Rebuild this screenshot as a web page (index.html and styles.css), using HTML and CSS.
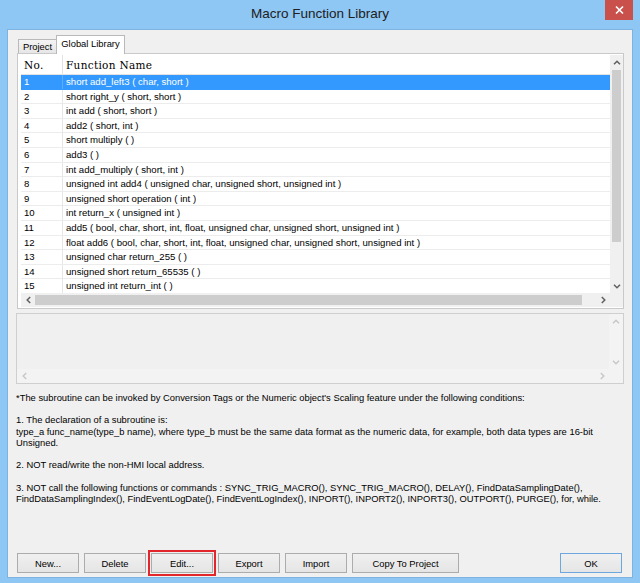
FILE: index.html
```html
<!DOCTYPE html>
<html lang="en">
<head>
  <meta charset="UTF-8" />
  <title>Macro Function Library</title>
  <link rel="stylesheet" href="styles.css">
</head>
<body>
  <div class="window">
    <div class="titlebar">
      <span></span>
      <span class="title">Macro Function Library</span>
      <span class="close">
        <svg width="9" height="8" viewBox="0 0 9 8"><path d="M1 0.5 L8 7.5 M8 0.5 L1 7.5" stroke="#fff" stroke-width="1.6" fill="none" /></svg>
      </span>
    </div>

    <div class="client">
      <!-- Tabs -->
      <div class="tabs">
        <div class="tab">Project</div>
        <div class="tab active">Global Library</div>
      </div>

      <div class="panel">
        <div class="listview">
          <div class="rows">
            <div class="row head"><span class="c-no">No.</span><span class="c-fn">Function Name</span></div>
            <div class="row selected"><span class="c-no">1</span><span class="c-fn">short add_left3 ( char, short )</span></div>
            <div class="row"><span class="c-no">2</span><span class="c-fn">short right_y ( short, short )</span></div>
            <div class="row"><span class="c-no">3</span><span class="c-fn">int add ( short, short )</span></div>
            <div class="row"><span class="c-no">4</span><span class="c-fn">add2 ( short, int )</span></div>
            <div class="row"><span class="c-no">5</span><span class="c-fn">short multiply ( )</span></div>
            <div class="row"><span class="c-no">6</span><span class="c-fn">add3 ( )</span></div>
            <div class="row"><span class="c-no">7</span><span class="c-fn">int add_multiply ( short, int )</span></div>
            <div class="row"><span class="c-no">8</span><span class="c-fn">unsigned int add4 ( unsigned char, unsigned short, unsigned int )</span></div>
            <div class="row"><span class="c-no">9</span><span class="c-fn">unsigned short operation ( int )</span></div>
            <div class="row"><span class="c-no">10</span><span class="c-fn">int return_x ( unsigned int )</span></div>
            <div class="row"><span class="c-no">11</span><span class="c-fn">add5 ( bool, char, short, int, float, unsigned char, unsigned short, unsigned int )</span></div>
            <div class="row"><span class="c-no">12</span><span class="c-fn">float add6 ( bool, char, short, int, float, unsigned char, unsigned short, unsigned int )</span></div>
            <div class="row"><span class="c-no">13</span><span class="c-fn">unsigned char return_255 ( )</span></div>
            <div class="row"><span class="c-no">14</span><span class="c-fn">unsigned short return_65535 ( )</span></div>
            <div class="row"><span class="c-no">15</span><span class="c-fn">unsigned int return_int ( )</span></div>
          </div>

          <!-- vertical scrollbar -->
          <div class="vscroll">
            <div class="arrow"><svg width="8" height="5" viewBox="0 0 8 5"><polyline points="1,4.2 4,1.2 7,4.2" /></svg></div>
            <div class="track"><div class="thumb-v"></div></div>
            <div class="arrow"><svg width="8" height="5" viewBox="0 0 8 5"><polyline points="1,0.8 4,3.8 7,0.8" /></svg></div>
          </div>

          <!-- horizontal scrollbar -->
          <div class="hscroll">
            <div class="arrow"><svg width="5" height="8" viewBox="0 0 5 8"><polyline points="4.2,1 1.2,4 4.2,7" /></svg></div>
            <div class="track"><div class="thumb-h"></div></div>
            <div class="arrow"><svg width="5" height="8" viewBox="0 0 5 8"><polyline points="0.8,1 3.8,4 0.8,7" /></svg></div>
          </div>
          <div class="corner"></div>
        </div>
      </div>

      <!-- description box (empty, disabled) -->
      <div class="descbox">
        <div class="desc-body"></div>
        <div class="vscroll disabled">
          <div class="arrow"><svg width="8" height="5" viewBox="0 0 8 5"><polyline points="1,4.2 4,1.2 7,4.2" /></svg></div>
          <div class="track"></div>
          <div class="arrow"><svg width="8" height="5" viewBox="0 0 8 5"><polyline points="1,0.8 4,3.8 7,0.8" /></svg></div>
        </div>
        <div class="hscroll disabled">
          <div class="arrow"><svg width="5" height="8" viewBox="0 0 5 8"><polyline points="4.2,1 1.2,4 4.2,7" /></svg></div>
          <div class="track"></div>
          <div class="arrow"><svg width="5" height="8" viewBox="0 0 5 8"><polyline points="0.8,1 3.8,4 0.8,7" /></svg></div>
        </div>
        <div class="corner"></div>
      </div>

      <div class="notes">
        <p>*The subroutine can be invoked by Conversion Tags or the Numeric object's Scaling feature under the following conditions:</p>
        <p>1. The declaration of a subroutine is:<br>type_a func_name(type_b name), where type_b must be the same data format as the numeric data, for example, both data types are 16-bit<br>Unsigned.</p>
        <p>2. NOT read/write the non-HMI local address.</p>
        <p>3. NOT call the following functions or commands : SYNC_TRIG_MACRO(), SYNC_TRIG_MACRO(), DELAY(), FindDataSamplingDate(),<br>FindDataSamplingIndex(), FindEventLogDate(), FindEventLogIndex(), INPORT(), INPORT2(), INPORT3(), OUTPORT(), PURGE(), for, while.</p>
      </div>

      <div class="buttons">
        <button class="btn">New...</button>
        <button class="btn">Delete</button>
        <button class="btn marked">Edit...</button>
        <button class="btn">Export</button>
        <button class="btn">Import</button>
        <button class="btn wide">Copy To Project</button>
        <button class="btn default">OK</button>
      </div>
    </div>
  </div>
</body>
</html>
```

FILE: styles.css
```css
body {
  margin: 0;
  background-color: #8ec7f4;
  font-family: "Liberation Sans", Arial, sans-serif;
  font-size: 9.4px;
  color: #000;
}

.window {
  height: 583px;
  display: flex;
  flex-direction: column;
}

/* title bar */
.titlebar {
  height: 29px;
  flex: none;
  display: grid;
  grid-template-columns: 1fr auto 1fr;
  align-items: start;
}

.title {
  font-size: 13.5px;
  color: #202020;
  padding-top: 6px;
}

.close {
  justify-self: end;
  margin-right: 7px;
  width: 28px;
  height: 20px;
  background-color: #c9504b;
  display: flex;
  align-items: center;
  justify-content: center;
}

.client {
  flex: 1;
  margin: 0 7px 5px;
  border: 1px solid #7fb3df;
  background-color: #f0f0f0;
  display: flex;
  flex-direction: column;
}

/* tabs */
.tabs {
  height: 23px;
  flex: none;
  display: flex;
  align-items: flex-end;
  padding-left: 10px;
}

.tab {
  box-sizing: border-box;
  height: 14px;
  width: 39px;
  border: 1px solid #b9b9b9;
  border-bottom: none;
  background: linear-gradient(#f4f4f4, #e6e6e6);
  text-align: center;
  line-height: 13px;
}

.tab.active {
  position: relative;
  z-index: 1;
  height: 19px;
  width: 69px;
  margin-left: -1px;
  margin-bottom: -1px;
  background: #fff;
  line-height: 16px;
}

.panel {
  box-sizing: border-box;
  height: 256px;
  flex: none;
  margin: 0 8px 0 9px;
  border: 1px solid #c9c9c9;
  background-color: #fff;
  padding: 1px 0 1px 3px;
}

.listview {
  display: grid;
  grid-template-columns: 1fr 13px;
  grid-template-rows: 238px 14px;
}

.rows {
  overflow: hidden;
  font-size: 9.6px;
}

.row {
  display: grid;
  grid-template-columns: 42px 1fr;
  height: 14.6px;
  line-height: 14px;
  box-sizing: border-box;
  border-bottom: 1px solid #ececec;
  white-space: nowrap;
}

.row .c-no {
  padding-left: 3px;
  border-right: 1px solid #e6e6e6;
}

.row .c-fn {
  padding-left: 3px;
}

.row.head {
  height: 20px;
  line-height: 20px;
  border-bottom: 1px solid #e2e2e2;
  font-family: "DejaVu Serif", serif;
  font-size: 10.5px;
  letter-spacing: 0.3px;
}

.row.head .c-no {
  border-right-color: #e2e2e2;
}

.row.selected {
  background-color: #3399ff;
  color: #fff;
  border-bottom-color: #3399ff;
}

.row.selected .c-no {
  border-right-color: #5aaeff;
}

/* scrollbars */
.vscroll {
  display: flex;
  flex-direction: column;
  background-color: #f0f0f0;
}

.vscroll .arrow {
  height: 14px;
  display: flex;
  align-items: center;
  justify-content: center;
}

.vscroll .track {
  flex: 1;
  padding: 1px 2px 0;
}

.thumb-v {
  height: 172px;
  background-color: #cdcdcd;
}

.hscroll {
  display: flex;
  background-color: #f0f0f0;
}

.hscroll .arrow {
  width: 14px;
  display: flex;
  align-items: center;
  justify-content: center;
}

.hscroll .track {
  flex: 1;
  padding: 2px 0;
}

.thumb-h {
  width: 547px;
  height: 100%;
  background-color: #cdcdcd;
}

.corner {
  background-color: #f0f0f0;
}

svg polyline {
  fill: none;
  stroke: #606060;
  stroke-width: 1.5;
}

.disabled svg polyline {
  stroke: #c8c8c8;
}

/* description box */
.descbox {
  box-sizing: border-box;
  height: 71px;
  flex: none;
  margin: 4px 8px 0;
  border: 1px solid #cfcfcf;
  display: grid;
  grid-template-columns: 1fr 14px;
  grid-template-rows: 1fr 14px;
}

.descbox .vscroll,
.descbox .hscroll,
.descbox .corner {
  background-color: #f3f3f3;
}

.notes {
  padding: 8px 0 0 8px;
  line-height: 11.2px;
  white-space: nowrap;
}

.notes p {
  margin: 0 0 11.2px;
}

/* buttons */
.buttons {
  margin-top: auto;
  display: flex;
  gap: 5px;
  padding: 0 10px 4px 9px;
}

.btn {
  box-sizing: border-box;
  width: 62px;
  height: 20px;
  padding: 0;
  border: 1px solid #acacac;
  background: linear-gradient(#f0f0f0, #e5e5e5);
  font-family: "Liberation Sans", Arial, sans-serif;
  font-size: 9.4px;
  color: #000;
}

.btn.wide {
  width: 107px;
}

.btn.default {
  margin-left: auto;
  border-color: #6ea7dd;
}

.btn.marked {
  outline: 2px solid #e3262b;
  outline-offset: 1px;
}
```
